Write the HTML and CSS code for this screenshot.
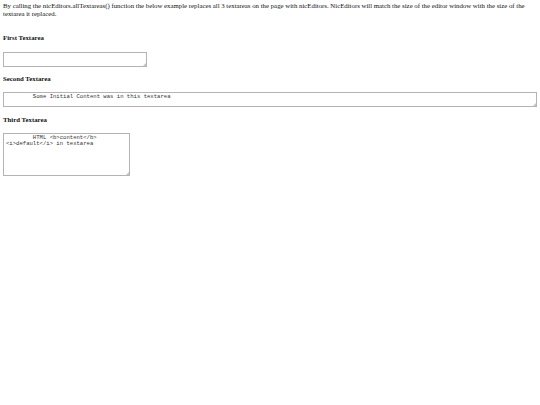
FILE: index.html
```html
<!DOCTYPE html>
<html>
<head>
<meta charset="utf-8">
<link rel="stylesheet" href="styles.css">
</head>
<body>
<p class="intro">By calling the nicEditors.allTextareas() function the below example replaces all 3 textareas on the page with nicEditors. NicEditors will match the size of the editor window with the size of the textarea it replaced.</p>
<h4 class="label first">First Textarea</h4>
<div class="field f1"><textarea class="ta"></textarea><span class="grip"></span></div>
<h4 class="label">Second Textarea</h4>
<div class="field f2"><textarea class="ta">	Some Initial Content was in this textarea</textarea><span class="grip"></span></div>
<h4 class="label">Third Textarea</h4>
<div class="field f3"><textarea class="ta">	HTML <b>content</b>
<i>default</i> in textarea</textarea><span class="grip"></span></div>
</body>
</html>
```
FILE: styles.css
```css
html, body {
  background: #fff;
}
body {
  margin: 0;
  padding: 2px 3px 0 3px;
  font-family: "Liberation Serif", serif;
  font-size: 6.8px;
  line-height: 8px;
  color: #111;
}
.intro {
  margin: 0;
}
.label {
  font-size: 6.8px;
  line-height: 8px;
  font-weight: bold;
  margin: 0;
}
.label.first {
  margin-top: 16px;
}
.field {
  position: relative;
}
.ta {
  display: block;
  box-sizing: border-box;
  width: 100%;
  height: 100%;
  margin: 0;
  padding: 1px 2px;
  border: 1px solid #b4b4b4;
  font-family: "Liberation Mono", monospace;
  font-size: 5.6px;
  line-height: 6.4px;
  color: #333;
  tab-size: 8;
  resize: none;
  background: #fff;
  overflow: hidden;
}
.grip {
  position: absolute;
  right: 1px;
  bottom: 1px;
  width: 0;
  height: 0;
  border-left: 3px solid transparent;
  border-bottom: 3px solid #c4c4c4;
}
.f1 {
  width: 144px;
  height: 15px;
  margin: 10px 0 8px;
}
.f2 {
  width: 534px;
  height: 15px;
  margin: 9px 0 9px;
}
.f3 {
  width: 127px;
  height: 43px;
  margin: 9px 0 0;
}
```
